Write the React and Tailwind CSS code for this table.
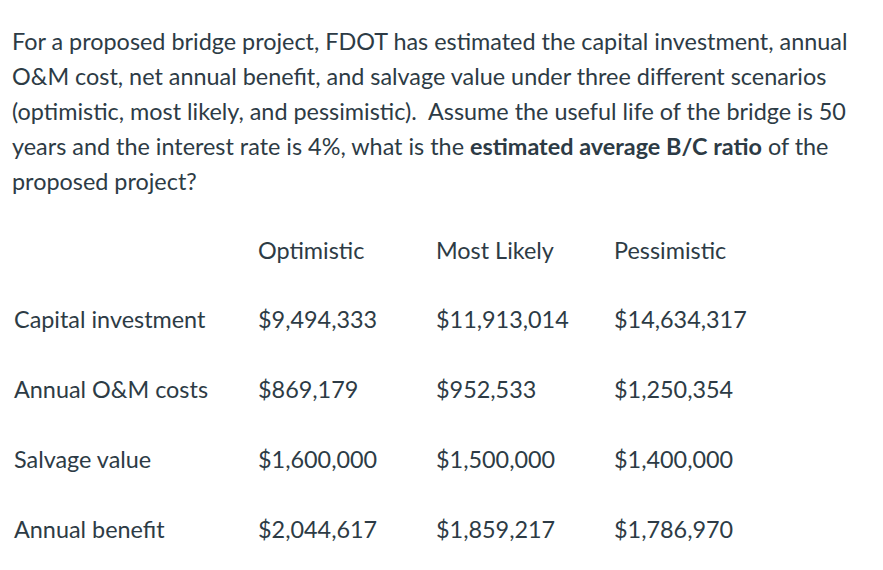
const ROWS = [
  ['Capital investment', '$9,494,333', '$11,913,014', '$14,634,317'],
  ['Annual O&M costs', '$869,179', '$952,533', '$1,250,354'],
  ['Salvage value', '$1,600,000', '$1,500,000', '$1,400,000'],
  ['Annual benefit', '$2,044,617', '$1,859,217', '$1,786,970'],
];

export default function App() {
  return (
    <div className="min-h-[570px] bg-white px-3 pt-[24px] text-[#2d3b45] font-['Lato',sans-serif] text-[23.4px]">
      <p className="leading-[35px] w-[865px]">
        For a proposed bridge project, FDOT has estimated the capital investment, annual O&amp;M cost, net
        annual benefit, and salvage value under three different scenarios (optimistic, most likely, and
        pessimistic).&nbsp; Assume the useful life of the bridge is 50 years and the interest rate is 4%, what
        is the <strong className="font-bold">estimated average B/C ratio</strong> of the proposed project?
      </p>
      <table className="mt-[34px] ml-[2px] border-collapse">
        <thead>
          <tr className="h-[69px]">
            <th className="w-[244px]" />
            <th className="w-[178px] text-left font-normal align-top">Optimistic</th>
            <th className="w-[178px] text-left font-normal align-top">Most Likely</th>
            <th className="w-[178px] text-left font-normal align-top">Pessimistic</th>
          </tr>
        </thead>
        <tbody>
          {ROWS.map((r) => (
            <tr key={r[0]} className="h-[70px] last:h-[68px]">
              {r.map((c, i) => (
                <td key={i} className="align-top p-0">
                  {c}
                </td>
              ))}
            </tr>
          ))}
        </tbody>
      </table>
    </div>
  );
}
